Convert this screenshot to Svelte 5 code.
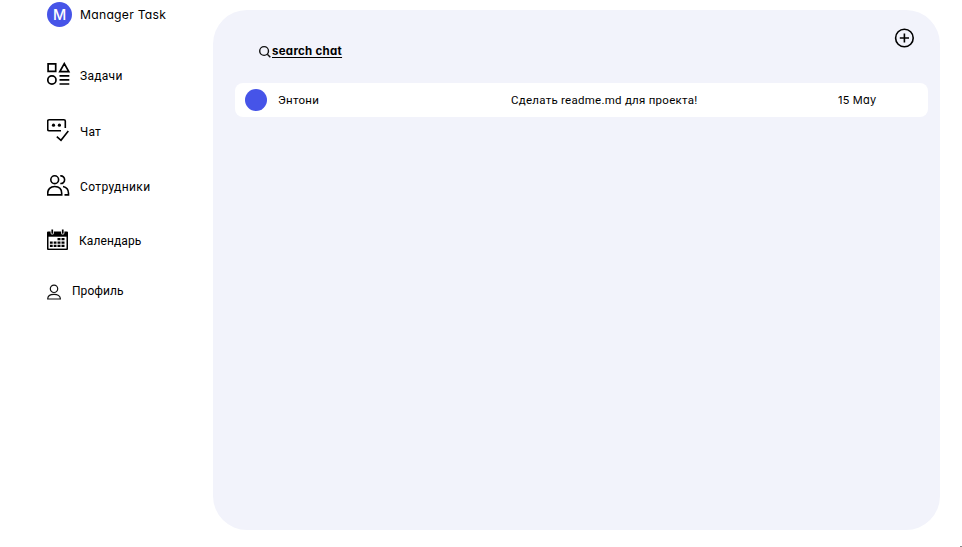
<script>
  const links = [
    { id: 'tasks', label: 'Задачи' },
    { id: 'chat', label: 'Чат' },
    { id: 'people', label: 'Сотрудники' },
    { id: 'calendar', label: 'Календарь' },
    { id: 'profile', label: 'Профиль' }
  ];
  const chats = [
    { name: 'Энтони', message: 'Сделать readme.md для проекта!', date: '15 May' }
  ];
</script>

<div class="app">
  <aside>
    <div class="brand"><span class="logo">M</span><span class="title">Manager Task</span></div>
    <nav>
      {#each links as link}
        <a class={link.id} href="#{link.id}">
          {#if link.id === 'tasks'}
            <svg width="24" height="24" viewBox="0.7 0 24 24" fill="none" stroke="#000" stroke-width="1.7">
              <path d="M1.8 1.8h7.6v7.6H1.8zM18 1.6l4.5 8h-9zM13.2 13.8h9.8M13.2 17.9h9.8M13.2 22h9.8" /><circle cx="5.6" cy="18" r="4.1" />
            </svg>
          {:else if link.id === 'chat'}
            <svg width="24" height="24" viewBox="0.5 -0.5 24 24" fill="none" stroke="#000" stroke-width="1.6">
              <path d="M14.5 12.2H2.6a1.4 1.4 0 0 1-1.4-1.4V2.6a1.4 1.4 0 0 1 1.4-1.4h14.8a1.4 1.4 0 0 1 1.4 1.4v6.8M10.3 18.1l4.2 3.7 7.3-9.2" /><circle cx="7" cy="6.7" r="1.6" fill="#000" stroke="none" /><circle cx="12.9" cy="6.7" r="1.6" fill="#000" stroke="none" />
            </svg>
          {:else if link.id === 'people'}
            <svg width="24" height="24" viewBox="0.3 -0.7 24 24" fill="none" stroke="#000" stroke-width="1.6">
              <circle cx="8" cy="6" r="3.9" /><path d="M1 21.2v-1.6c0-4.2 2.7-6.8 7-6.8s7 2.6 7 6.8v1.6zM13.6 2.2c2.5-.3 4.3 1.5 4.3 3.8s-1.8 4.1-4.3 3.8M16.3 12.8c3.5.7 5.5 3.2 5.5 6.8v1.6h-4" />
            </svg>
          {:else if link.id === 'calendar'}
            <svg width="22" height="21" viewBox="0.5 -0.5 22 21">
              <path d="M1.5 2h19a1 1 0 0 1 1 1v16.5a1 1 0 0 1-1 1h-19a1 1 0 0 1-1-1V3a1 1 0 0 1 1-1z" /><path d="M2 7.2h18v11.9H2z" fill="#fff" />
              <path d="M4.1 0h3.3v3.4a1.6 1.6 0 0 1-3.3 0zM14.6 0h3.3v3.4a1.6 1.6 0 0 1-3.3 0z" fill="#fff" /><path d="M4.9 0h1.7v3.5a.8.8 0 0 1-1.7 0zM15.4 0h1.7v3.5a.8.8 0 0 1-1.7 0z" />
              <path d="M11 8.5h3v2.3h-3zM15 8.5h3v2.3h-3zM3.4 12h2.8v2.2H3.4zM7.2 12H10v2.2H7.2zM11 12h3v2.2h-3zM15 12h3v2.2h-3zM3.4 15.3h2.8v2.2H3.4zM7.2 15.3H10v2.2H7.2zM11 15.3h3v2.2h-3zM15 15.3h3v2.2h-3z" />
            </svg>
          {:else}
            <svg width="15" height="17" viewBox="0.1 -1.2 15 17" fill="none" stroke="#111" stroke-width="1.2">
              <circle cx="7.1" cy="4.6" r="3.7" /><path d="M.8 14.8c0-3 2.8-4.7 6.3-4.7s6.4 1.7 6.4 4.7z" />
            </svg>
          {/if}
          <span>{link.label}</span>
        </a>
      {/each}
    </nav>
  </aside>
  <main>
    <header>
      <div class="search">
        <svg width="13" height="13" viewBox="0.5 -0.5 13 13" fill="none" stroke="#111" stroke-width="1.4"><circle cx="5.6" cy="5.5" r="4.4" /><path d="M8.8 8.7l3 3" /></svg>
        <b>search chat</b>
      </div>
      <svg class="add" width="20" height="20" viewBox="-0.4 0 20 20" fill="none" stroke="#000" stroke-width="1.6"><circle cx="10" cy="10" r="8.8" /><path d="M10 5.4v9.2M5.4 10h9.2" /></svg>
    </header>
    {#each chats as chat}
      <div class="row">
        <i class="avatar"></i>
        <span class="name">{chat.name}</span>
        <span class="message">{chat.message}</span>
        <span class="date">{chat.date}</span>
      </div>
    {/each}
  </main>
  <i class="corner"></i>
</div>

<style>
  .app { box-sizing: border-box; position: relative; display: flex; width: 962px; height: 547px; overflow: hidden; background: #fff; color: #000; font: 12px/16px Roboto, "Liberation Sans", sans-serif; white-space: nowrap; }
  aside { box-sizing: border-box; width: 213px; padding: 2px 0 0 47px; }
  .brand { display: flex; align-items: center; height: 25px; gap: 8px; }
  .logo { width: 25px; height: 25px; border-radius: 50%; background: #4654e8; color: #fff; font: 500 14.5px/25px Inter, sans-serif; text-align: center; }
  .title { font: 12.2px/16px Inter, sans-serif; font-feature-settings: "cv11"; letter-spacing: .24px; }
  nav { display: flex; flex-direction: column; padding-top: 35px; }
  a { display: flex; align-items: center; color: inherit; text-decoration: none; }
  svg { display: block; flex: none; }
  .tasks { height: 24px; gap: 9px; letter-spacing: .3px; }
  .tasks span { margin-top: 3px; }
  .chat { height: 24px; margin-top: 32px; gap: 9px; letter-spacing: .2px; }
  .chat span { margin-top: 3px; }
  .people { height: 24px; margin-top: 31px; gap: 9px; letter-spacing: .36px; }
  .people span { margin-top: 4px; }
  .calendar { height: 21px; margin-top: 32px; gap: 10px; letter-spacing: .1px; }
  .calendar span { margin-top: 2px; }
  .profile { height: 16px; margin-top: 33px; gap: 10px; letter-spacing: .04px; }
  .profile span { margin-top: -1px; }
  main { box-sizing: border-box; width: 727px; height: 520px; margin-top: 10px; padding: 0 12px 0 22px; border-radius: 34px; background: #f2f3fb; }
  header { display: flex; justify-content: space-between; height: 73px; padding: 0 14px 0 24px; }
  .search { display: flex; align-items: center; height: 16px; margin-top: 33px; gap: 0; }
  .search b { font: 700 11.5px/16px Inter, sans-serif; font-feature-settings: "cv11"; letter-spacing: .28px; text-decoration: underline; text-underline-offset: 1.5px; text-decoration-thickness: 1px; }
  .add { margin-top: 18px; }
  .row { display: flex; align-items: center; height: 34px; padding-left: 10px; border-radius: 8px; background: #fff; font-size: 11.5px; letter-spacing: .26px; }
  .avatar { width: 22px; height: 22px; border-radius: 50%; background: #4654e8; }
  .name { width: 233px; margin-left: 11px; }
  .message { width: 327px; }
  .date { font: 11px/16px Inter, sans-serif; font-feature-settings: "cv11"; letter-spacing: .2px; }
  .corner { position: absolute; right: 0; bottom: 0; width: 2px; height: 1px; background: #888; }
</style>
